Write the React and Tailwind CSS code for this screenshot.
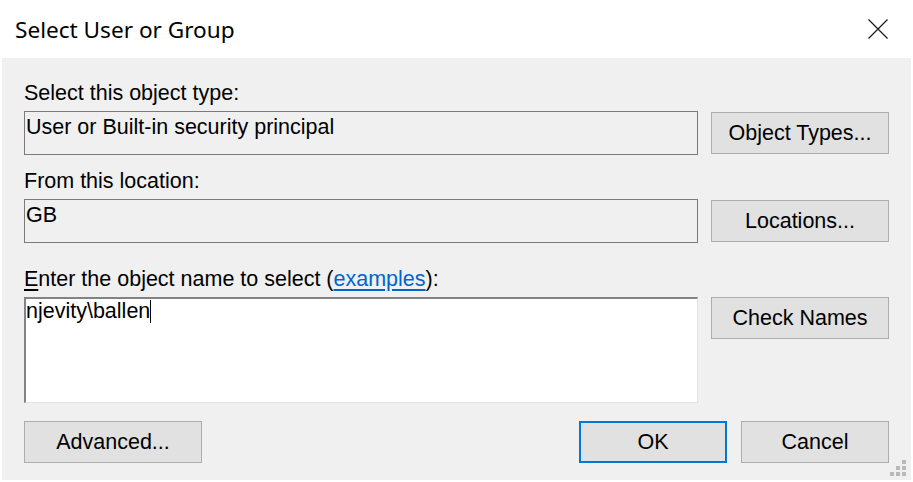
export default function App() {
  const body = { fontFamily: '"Liberation Sans", Arial, sans-serif' };

  return (
    <div className="w-[913px] h-[482px] bg-white flex flex-col text-black" style={body}>
      <div className="h-[58px] shrink-0 flex items-center pl-[15px] pr-[25px]">
        <span
          className="text-[22.6px] leading-[30px] pt-[1px]"
          style={{ fontFamily: '"Noto Sans", "Liberation Sans", sans-serif' }}
        >
          Select User or Group
        </span>
        <svg className="ml-auto" width="20" height="20" viewBox="0 0 20 20">
          <path d="M0.5 0.5 L19.5 19.5 M19.5 0.5 L0.5 19.5" stroke="#1a1a1a" strokeWidth="1.2" fill="none" />
        </svg>
      </div>

      <div className="relative flex-1 mx-[2px] mb-[2px] bg-[#f0f0f0] px-[22px] pt-[23px] text-[21.5px] leading-[24px]">
        <div className="h-[24px]">Select this object type:</div>
        <div className="mt-[6px] flex items-center gap-[13px]">
          <div className="flex-1 h-[44px] border border-[#7a7a7a] pt-[3px] pl-[1px]">
            User or Built-in security principal
          </div>
          <Btn className="w-[178px]">Object Types...</Btn>
        </div>

        <div className="mt-[14px] h-[24px]">From this location:</div>
        <div className="mt-[6px] flex items-center gap-[13px]">
          <div className="flex-1 h-[44px] border border-[#7a7a7a] pt-[3px] pl-[1px]">GB</div>
          <Btn className="w-[178px]">Locations...</Btn>
        </div>

        <div className="mt-[24px] h-[24px]">
          <span className="underline underline-offset-[3px]">E</span>nter the object name to select (
          <span className="text-[#0066cc] underline underline-offset-[3px]">examples</span>):
        </div>
        <div className="mt-[6px] flex items-start gap-[13px]">
          <div className="flex-1 h-[106px] bg-white border-t-2 border-l-2 border-r border-b border-t-[#838383] border-l-[#838383] border-r-[#e3e3e3] border-b-[#e3e3e3]">
            njevity\ballen
            <span className="inline-block w-px h-[23px] bg-black align-[-5px]" />
          </div>
          <Btn className="w-[178px]">Check Names</Btn>
        </div>

        <div className="mt-[18px] flex items-center">
          <Btn className="w-[178px]">Advanced...</Btn>
          <Btn className="ml-auto w-[148px] border-2 border-[#0078d7]">OK</Btn>
          <Btn className="ml-[14px] w-[148px]">Cancel</Btn>
        </div>

        <svg className="absolute right-[5px] bottom-[4px]" width="16" height="16" viewBox="0 0 16 16">
          <rect x="12" y="0" width="4" height="4" fill="#b9b9b9" />
          <rect x="6" y="6" width="4" height="4" fill="#b9b9b9" />
          <rect x="12" y="6" width="4" height="4" fill="#b9b9b9" />
          <rect x="0" y="12" width="4" height="4" fill="#b9b9b9" />
          <rect x="6" y="12" width="4" height="4" fill="#b9b9b9" />
          <rect x="12" y="12" width="4" height="4" fill="#b9b9b9" />
        </svg>
      </div>
    </div>
  );
}

function Btn({ className = "", children }) {
  const border = className.includes("border-2") ? "" : "border border-[#adadad]";
  return (
    <div className={`h-[42px] shrink-0 flex items-center justify-center bg-[#e1e1e1] ${border} ${className}`}>
      {children}
    </div>
  );
}
